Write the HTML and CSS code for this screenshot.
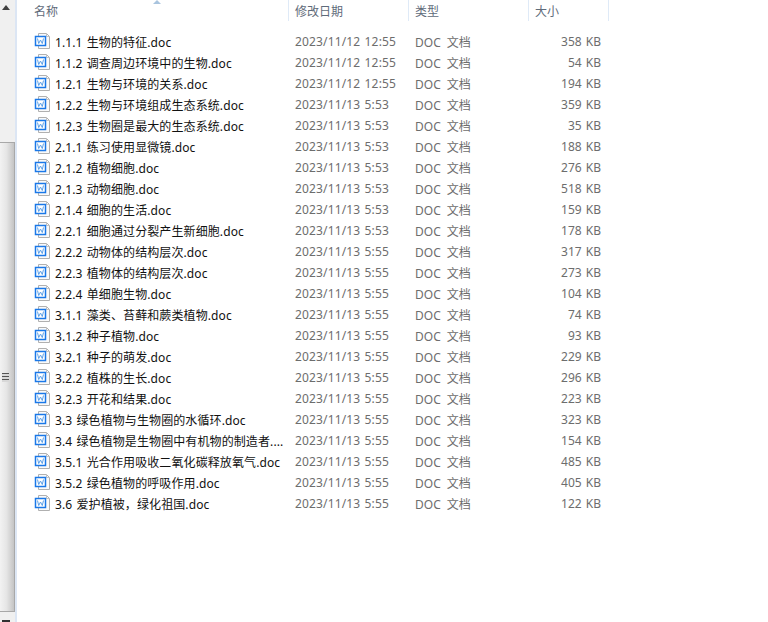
FILE: index.html
```html
<html>
<head>
  <title>文件列表</title>
  <link rel="stylesheet" href="styles.css">
</head>
<body>
  <div class="barra">
    <div class="flecha arriba"></div>
    <div class="pista"></div>
    <div class="pulgar"><div class="agarre"></div></div>
    <div class="flecha abajo"></div>
  </div>
  <div class="ventana">
    <div class="cabecera">
      <div class="col nombre">名称<span class="orden"></span></div>
      <div class="col fecha">修改日期</div>
      <div class="col tipo">类型</div>
      <div class="col peso">大小</div>
    </div>
    <div class="lista" id="lista"></div>
  </div>
  <script src="lista.js"></script>
</body>
</html>
```

FILE: styles.css
```css
html, body {
  margin: 0;
  height: 100%;
  overflow: hidden;
}

body {
  display: flex;
  width: 768px;
  height: 622px;
  background: #ffffff;
  font-family: "Noto Sans", "Noto Sans CJK SC", sans-serif;
  font-size: 12px;
}

.barra {
  width: 15px;
  height: 622px;
  flex: none;
  display: flex;
  flex-direction: column;
  background: #f0f0f0;
  border-right: 2px solid #dce6f4;
}

.flecha {
  height: 17px;
  flex: none;
  position: relative;
}

.flecha.arriba::after {
  content: "";
  position: absolute;
  left: 2px;
  top: 5px;
  border-left: 4px solid transparent;
  border-right: 4px solid transparent;
  border-bottom: 5px solid #404040;
}

.flecha.abajo {
  height: 10px;
}

.flecha.abajo::after {
  content: "";
  position: absolute;
  left: 2px;
  top: 8px;
  width: 8px;
  height: 2px;
  background: #303030;
}

.pista {
  height: 125px;
  flex: none;
}

.pulgar {
  flex: 1;
  display: flex;
  align-items: center;
  justify-content: center;
  padding-right: 4px;
  border: 1px solid #a8a8a8;
  border-left: none;
  background: linear-gradient(to right, #f2f2f2, #e6e6e6 45%, #c4c4c4);
}

.agarre {
  width: 7px;
  height: 9px;
  background: repeating-linear-gradient(to bottom, #555555 0, #555555 1px, #d8d8d8 1px, #d8d8d8 3px);
}

.ventana {
  flex: 1;
}

.cabecera {
  display: flex;
  height: 21px;
  color: #5f6b7a;
}

.col {
  box-sizing: border-box;
  height: 21px;
  line-height: 23px;
  padding-left: 6px;
  border-right: 1px solid #dfeaf7;
  position: relative;
}

.nombre { width: 272px; padding-left: 17px; }
.fecha { width: 120px; }
.tipo { width: 120px; }
.peso { width: 80px; }

.orden {
  position: absolute;
  left: 136px;
  top: 0;
  border-left: 4px solid transparent;
  border-right: 4px solid transparent;
  border-bottom: 4px solid #a9c4de;
}

.lista {
  padding-top: 9px;
}

.fila {
  display: flex;
  height: 21px;
  align-items: center;
  color: #6d6d6d;
  white-space: nowrap;
}

.icono {
  width: 16px;
  height: 16px;
  margin-left: 17px;
  margin-right: 5px;
  flex: none;
}

.archivo {
  width: 240px;
  flex: none;
  padding-top: 2px;
  color: #111111;
  letter-spacing: 0.1px;
  word-spacing: 1px;
}

.modif {
  width: 120px;
  flex: none;
  padding-top: 2px;
  letter-spacing: 0.15px;
  word-spacing: 1px;
}

.clase {
  width: 120px;
  flex: none;
  padding-top: 2px;
  word-spacing: 3px;
}

.tam {
  width: 66px;
  flex: none;
  padding-top: 2px;
  text-align: right;
  word-spacing: 1px;
}
```

FILE: lista.js
```js
// filas de la lista
var archivos = [
  ["1.1.1 生物的特征.doc", "2023/11/12 12:55", "358 KB"],
  ["1.1.2 调查周边环境中的生物.doc", "2023/11/12 12:55", "54 KB"],
  ["1.2.1 生物与环境的关系.doc", "2023/11/12 12:55", "194 KB"],
  ["1.2.2 生物与环境组成生态系统.doc", "2023/11/13 5:53", "359 KB"],
  ["1.2.3 生物圈是最大的生态系统.doc", "2023/11/13 5:53", "35 KB"],
  ["2.1.1 练习使用显微镜.doc", "2023/11/13 5:53", "188 KB"],
  ["2.1.2 植物细胞.doc", "2023/11/13 5:53", "276 KB"],
  ["2.1.3 动物细胞.doc", "2023/11/13 5:53", "518 KB"],
  ["2.1.4 细胞的生活.doc", "2023/11/13 5:53", "159 KB"],
  ["2.2.1 细胞通过分裂产生新细胞.doc", "2023/11/13 5:53", "178 KB"],
  ["2.2.2 动物体的结构层次.doc", "2023/11/13 5:55", "317 KB"],
  ["2.2.3 植物体的结构层次.doc", "2023/11/13 5:55", "273 KB"],
  ["2.2.4 单细胞生物.doc", "2023/11/13 5:55", "104 KB"],
  ["3.1.1 藻类、苔藓和蕨类植物.doc", "2023/11/13 5:55", "74 KB"],
  ["3.1.2 种子植物.doc", "2023/11/13 5:55", "93 KB"],
  ["3.2.1 种子的萌发.doc", "2023/11/13 5:55", "229 KB"],
  ["3.2.2 植株的生长.doc", "2023/11/13 5:55", "296 KB"],
  ["3.2.3 开花和结果.doc", "2023/11/13 5:55", "223 KB"],
  ["3.3 绿色植物与生物圈的水循环.doc", "2023/11/13 5:55", "323 KB"],
  ["3.4 绿色植物是生物圈中有机物的制造者....", "2023/11/13 5:55", "154 KB"],
  ["3.5.1 光合作用吸收二氧化碳释放氧气.doc", "2023/11/13 5:55", "485 KB"],
  ["3.5.2 绿色植物的呼吸作用.doc", "2023/11/13 5:55", "405 KB"],
  ["3.6 爱护植被，绿化祖国.doc", "2023/11/13 5:55", "122 KB"]
];

var icono = '<svg class="icono" viewBox="0 0 16 16">' +
  '<path d="M4.5 0.5H12.5L15.5 3.5V15.5H4.5Z" fill="#fafafa" stroke="#b0b0b0"/>' +
  '<path d="M12.5 0.5V3.5H15.5" fill="none" stroke="#c4c4c4"/>' +
  '<rect x="1.5" y="3.5" width="10" height="9" fill="#ffffff" stroke="#1a78e8" stroke-width="1.5"/>' +
  '<path d="M3.5 5.5L4.7 10.5L6.5 7L8.3 10.5L9.5 5.5" fill="none" stroke="#5a9fe8"/>' +
  '</svg>';

var lista = document.getElementById("lista");
var html = "";
archivos.forEach(function(a) {
  html += '<div class="fila">' + icono +
    '<div class="archivo">' + a[0] + '</div>' +
    '<div class="modif">' + a[1] + '</div>' +
    '<div class="clase">DOC 文档</div>' +
    '<div class="tam">' + a[2] + '</div></div>';
});
lista.innerHTML = html;
```
